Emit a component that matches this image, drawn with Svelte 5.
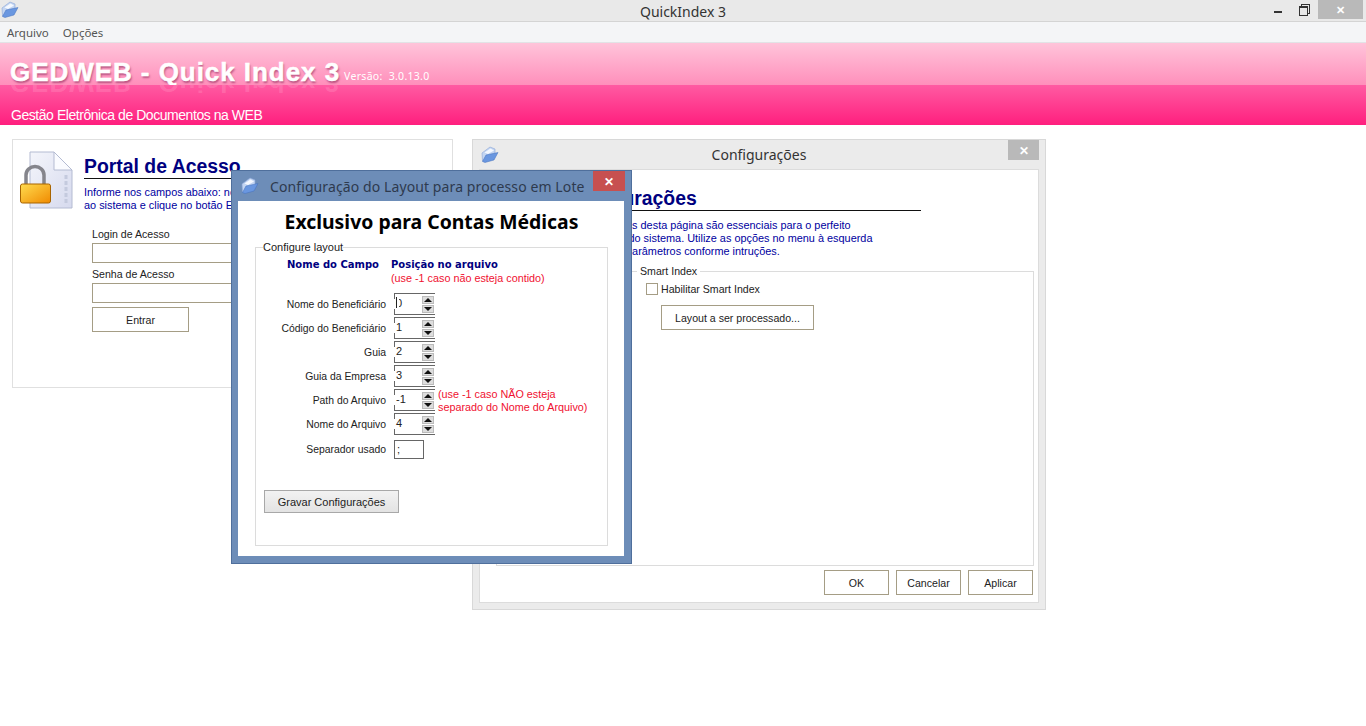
<script>
  const fields = [
    { label: 'Nome do Beneficiário', value: '0', focused: true },
    { label: 'Código do Beneficiário', value: '1' },
    { label: 'Guia', value: '2' },
    { label: 'Guia da Empresa', value: '3' },
    { label: 'Path do Arquivo', value: '-1', note: true },
    { label: 'Nome do Arquivo', value: '4' }
  ]
</script>

{#snippet folder(size)}
  <svg class="folder" width={size} height={size} viewBox="0 0 18 18" aria-hidden="true">
    <path d="M1 7 L9 1 L14 3 L14 8 L4 15 L1.5 15 Z" fill="#c4d6f2" stroke="#8aa5d6" stroke-width=".6" />
    <path d="M3.5 6.5 L9.5 2.5 L13 4.5 L7 8 Z" fill="#f4f8ff" />
    <path d="M1.5 15.5 L5 9 L17 6.5 L13 14 L4 16.5 Z" fill="#6a97e0" stroke="#4470bd" stroke-width=".5" />
  </svg>
{/snippet}

<div class="app">
  <header class="titlebar">
    {@render folder(18)}
    <span class="title">QuickIndex 3</span>
    <div class="controls">
      <span class="min"></span>
      <span class="restore"></span>
      <span class="close">✕</span>
    </div>
  </header>

  <nav class="menu">
    <span>Arquivo</span>
    <span>Opções</span>
  </nav>

  <section class="banner">
    <div class="banner-top">
      <h1>GEDWEB - Quick Index 3</h1>
      <span class="version">Versão: &nbsp;3.0.13.0</span>
    </div>
    <div class="banner-bottom">
      <span class="reflect" aria-hidden="true">GEDWEB - Quick Index 3</span>
      <p>Gestão Eletrônica de Documentos na WEB</p>
    </div>
  </section>

  <main class="desktop">
    <div class="login">
      <svg class="lock" width="56" height="62" viewBox="0 0 56 62" aria-hidden="true">
        <defs>
          <linearGradient id="lockbody" x1="0" y1="0" x2="1" y2="1">
            <stop offset="0" stop-color="#ffdc50" />
            <stop offset="1" stop-color="#f08a00" />
          </linearGradient>
          <linearGradient id="page" x1="0" y1="0" x2="1" y2="1">
            <stop offset="0" stop-color="#f4f5fb" />
            <stop offset="1" stop-color="#d6daee" />
          </linearGradient>
        </defs>
        <path d="M10 1 H34 L52 19 V57 H10 Z" fill="url(#page)" stroke="#b4bbd2" />
        <path d="M34 1 V19 H52 Z" fill="#fafbff" stroke="#b4bbd2" />
        <path d="M46 24 V54" stroke="#c4cade" stroke-width="3" stroke-dasharray="4 2" />
        <path d="M6 33 V24 a9 8.5 0 0 1 18 0 V33" fill="none" stroke="#85858c" stroke-width="3.5" />
        <rect x="0.5" y="33" width="30" height="19" rx="2" fill="url(#lockbody)" stroke="#a86400" />
      </svg>
      <div class="login-body">
        <h2 class="heading">Portal de Acesso</h2>
        <p class="intro">Informe nos campos abaixo: nome de usuário e senha para ter acesso<br />ao sistema e clique no botão Entrar</p>
        <div class="login-form">
          <label for="login">Login de Acesso</label>
          <input id="login" class="text" />
          <label for="senha">Senha de Acesso</label>
          <input id="senha" class="text" />
          <button class="flat enter">Entrar</button>
        </div>
      </div>
    </div>

    <div class="config">
      <div class="config-title">
        {@render folder(18)}
        <span>Configurações</span>
        <b class="config-close">✕</b>
      </div>
      <div class="config-inner">
        <div class="config-text">
          <h2 class="heading">Configurações</h2>
          <p class="intro">As configurações desta página são essenciais para o perfeito<br />funcionamento do sistema. Utilize as opções no menu à esquerda<br />para definir os parâmetros conforme intruções.</p>
        </div>
        <fieldset class="smart">
          <legend>Smart Index</legend>
          <label class="check"><span class="box"></span>Habilitar Smart Index</label>
          <button class="flat layout">Layout a ser processado...</button>
        </fieldset>
        <div class="actions">
          <button class="flat">OK</button>
          <button class="flat">Cancelar</button>
          <button class="flat">Aplicar</button>
        </div>
      </div>
    </div>

    <div class="modal">
      <div class="modal-title">
        {@render folder(18)}
        <span>Configuração do Layout para processo em Lote</span>
        <b class="modal-close">✕</b>
      </div>
      <div class="modal-inner">
        <h3>Exclusivo para Contas Médicas</h3>
        <fieldset class="layout-set">
          <legend>Configure layout</legend>
          <div class="cols">
            <strong class="col-a">Nome do Campo</strong>
            <div>
              <strong>Posição no arquivo</strong>
              <div class="red">(use -1 caso não esteja contido)</div>
            </div>
          </div>
          <div class="rows">
            {#each fields as f}
              <div class="row">
                <span class="lbl">{f.label}</span>
                <div class="spin" class:focused={f.focused}>
                  <span>{f.value}</span>
                  <div class="arrows"><i class="up"></i><i class="down"></i></div>
                </div>
                {#if f.note}
                  <div class="red note">(use -1 caso NÃO esteja<br />separado do Nome do Arquivo)</div>
                {/if}
              </div>
            {/each}
            <div class="row sep">
              <span class="lbl">Separador usado</span>
              <div class="sepbox">;</div>
            </div>
          </div>
          <button class="save">Gravar Configurações</button>
        </fieldset>
      </div>
    </div>
  </main>
</div>

<style>
  :global(body) {
    margin: 0;
    background: #fff;
  }

  .app {
    width: 1366px;
    height: 726px;
    overflow: hidden;
    font-family: "Liberation Sans", Arial, sans-serif;
    font-size: 11px;
    color: #222;
  }

  .titlebar {
    height: 22px;
    box-sizing: border-box;
    padding-top: 2px;
    background: #e9e9e9;
    border-bottom: 1px solid #d4d4d4;
    display: flex;
    align-items: center;
    justify-content: center;
    position: relative;
    font-family: "Noto Sans", sans-serif;
  }

  .titlebar > .folder {
    position: absolute;
    left: 1px;
    top: 1px;
  }

  .title {
    font-size: 14px;
    color: #333;
  }

  .controls {
    position: absolute;
    right: 3px;
    top: 0;
    display: flex;
    align-items: center;
    height: 19px;
  }

  .min {
    width: 8px;
    height: 2px;
    background: #333;
    margin: 5px 17px 0 0;
  }

  .restore {
    width: 7px;
    height: 7px;
    border: 1px solid #333;
    border-top-width: 2px;
    margin: 2px 10px 0 0;
    box-shadow: 2px -2px 0 -1px #e9e9e9, 2px -2px 0 0 #333;
  }

  .close {
    width: 45px;
    height: 19px;
    background: #b9b9b9;
    color: #fff;
    font-size: 11px;
    font-weight: 700;
    display: flex;
    align-items: center;
    justify-content: center;
  }

  .menu {
    height: 21px;
    box-sizing: border-box;
    background: #f4f5f7;
    border-bottom: 1px solid #e2e3e6;
    padding-left: 7px;
    display: flex;
    align-items: center;
    gap: 14px;
    font: 11.5px "Noto Sans", sans-serif;
    color: #555;
  }

  .banner {
    height: 82px;
    display: flex;
    flex-direction: column;
  }

  .banner-top {
    height: 42px;
    background: linear-gradient(#ffc4da, #ff8fbb);
    display: flex;
    align-items: flex-end;
    padding-left: 10px;
    box-sizing: border-box;
  }

  .banner-top h1 {
    margin: 0 0 -2px;
    font: 700 26px/30px "Liberation Sans", Arial, sans-serif;
    letter-spacing: .95px;
    color: #fff;
    -webkit-text-stroke: .5px #fff;
    text-shadow: 1px 2px 2px rgba(130, 30, 80, .55);
  }

  .version {
    font: 10.5px "Noto Sans", sans-serif;
    color: #fff;
    margin: 0 0 2px 4px;
    letter-spacing: .3px;
  }

  .banner-bottom {
    flex: 1;
    background: linear-gradient(#ff5ba2, #ff1f7e);
    position: relative;
    overflow: hidden;
  }

  .reflect {
    position: absolute;
    left: 10px;
    top: -17px;
    font: 700 26px/30px "Liberation Sans", Arial, sans-serif;
    letter-spacing: .95px;
    color: rgba(255, 255, 255, .14);
    transform: scaleY(-1);
  }

  .banner-bottom p {
    position: absolute;
    left: 11px;
    top: 21px;
    margin: 0;
    font: 14px/18px "Liberation Sans", Arial, sans-serif;
    color: #fff;
    letter-spacing: -.45px;
  }

  .desktop {
    position: relative;
    height: 601px;
  }

  .login {
    position: absolute;
    left: 12px;
    top: 14px;
    width: 441px;
    height: 249px;
    border: 1px solid #e0e0e0;
    display: flex;
    gap: 8px;
    padding: 11px 0 0 7px;
    box-sizing: border-box;
  }

  .lock {
    flex: none;
  }

  .login-body {
    flex: 1;
    min-width: 0;
  }

  .heading {
    margin: 3px 0 0;
    width: 340px;
    font: 700 19.4px/24px "Liberation Sans", Arial, sans-serif;
    color: #00007f;
    border-bottom: 1px solid #111;
  }

  .intro {
    margin: 7px 0 0;
    font-size: 10.9px;
    line-height: 13px;
    color: #0000a0;
    white-space: nowrap;
  }

  .login-form {
    margin: 15px 0 0 8px;
    display: flex;
    flex-direction: column;
    align-items: flex-start;
    font-size: 10.6px;
  }

  .login-form label {
    line-height: 14px;
  }

  .text {
    width: 300px;
    height: 18px;
    border: 1px solid #a59d85;
    margin: 2px 0 4px;
    padding: 0;
    box-sizing: content-box;
    background: #fff;
  }

  .flat {
    height: 25px;
    border: 1px solid #a59d85;
    background: #fff;
    font: inherit;
    font-size: 10.6px;
    color: #222;
    padding: 0;
  }

  .enter {
    width: 97px;
  }

  .config {
    position: absolute;
    left: 472px;
    top: 14px;
    width: 574px;
    height: 471px;
    background: #ebebeb;
    border: 1px solid #d8d8d8;
    box-sizing: border-box;
    padding: 0 6px 6px;
    display: flex;
    flex-direction: column;
  }

  .config-title {
    height: 29px;
    flex: none;
    display: flex;
    align-items: center;
    justify-content: center;
    font: 14px "Noto Sans", sans-serif;
    color: #333;
    position: relative;
  }

  .config-title .folder {
    position: absolute;
    left: 2px;
    top: 6px;
  }

  .config-close {
    position: absolute;
    right: 0;
    top: 0;
    width: 31px;
    height: 20px;
    background: #b9b9b9;
    color: #fff;
    font-size: 12px;
    display: flex;
    align-items: center;
    justify-content: center;
  }

  .config-inner {
    flex: 1;
    background: #fff;
    border: 1px solid #dcdcdc;
    box-sizing: border-box;
    padding: 16px 5px 7px 16px;
    display: flex;
    flex-direction: column;
    min-height: 0;
  }

  .config-text {
    padding-left: 65px;
  }

  .config-text .heading {
    margin-top: 0;
    width: 360px;
  }

  .config-text .intro {
    margin: 8px 0 0 -7px;
  }

  .smart {
    flex: 1;
    margin: 7px -1px 0 0;
    border: 1px solid #dcdcdc;
    padding: 0 0 0 149px;
    min-height: 0;
    min-width: 0;
    font-size: 10.6px;
  }

  .smart legend {
    padding: 0 3px;
    margin-left: -9px;
  }

  .check {
    display: flex;
    align-items: center;
    gap: 3px;
    margin: 6px 0 10px;
  }

  .box {
    width: 10px;
    height: 10px;
    border: 1px solid #a59d85;
  }

  .layout {
    width: 153px;
    margin-left: 15px;
  }

  .actions {
    display: flex;
    justify-content: flex-end;
    gap: 7px;
    margin-top: 4px;
  }

  .actions .flat {
    width: 65px;
  }

  .modal {
    position: absolute;
    left: 231px;
    top: 45px;
    width: 401px;
    height: 394px;
    background: #6d8db8;
    border: 1px solid #4f6f9c;
    box-sizing: border-box;
    padding: 0 7px 7px 6px;
    display: flex;
    flex-direction: column;
  }

  .modal-title {
    height: 30px;
    flex: none;
    display: flex;
    align-items: center;
    padding-left: 32px;
    font: 14px "Noto Sans", sans-serif;
    letter-spacing: .1px;
    color: #2e3a4e;
    position: relative;
  }

  .modal-title .folder {
    position: absolute;
    left: 3px;
    top: 6px;
  }

  .modal-close {
    position: absolute;
    right: -1px;
    top: 0;
    width: 32px;
    height: 20px;
    background: #c75050;
    color: #fff;
    font-size: 12px;
    display: flex;
    align-items: center;
    justify-content: center;
  }

  .modal-inner {
    flex: 1;
    background: #fff;
    padding: 0 16px 10px 17px;
    display: flex;
    flex-direction: column;
    min-height: 0;
  }

  h3 {
    margin: 9px 0 0;
    text-align: center;
    font: 700 19.4px/24px "Noto Sans", sans-serif;
    color: #000;
  }

  .layout-set {
    flex: 1;
    margin: 7px 0 0;
    border: 1px solid #dcdcdc;
    padding: 0;
    min-width: 0;
    min-height: 0;
  }

  .layout-set legend {
    padding: 0;
    margin-left: 7px;
    line-height: 13px;
  }

  .cols {
    display: flex;
    padding-left: 31px;
    margin-top: 4px;
    line-height: 13px;
  }

  .cols strong {
    display: block;
    color: #00007f;
    font-family: "DejaVu Sans", Verdana, sans-serif;
    font-size: 10px;
    margin-bottom: 1px;
  }

  .col-a {
    width: 104px;
    flex: none;
  }

  .red {
    color: #f01030;
    font-size: 10.8px;
  }

  .rows {
    margin-top: 8px;
    display: flex;
    flex-direction: column;
    gap: 2px;
  }

  .row {
    height: 22px;
    display: flex;
    align-items: center;
    position: relative;
  }

  .row.sep {
    height: 19px;
    margin-top: 3px;
  }

  .lbl {
    width: 130px;
    text-align: right;
    flex: none;
    margin-right: 8px;
    font-size: 10.4px;
  }

  .spin {
    width: 41px;
    height: 22px;
    border-top: 1px solid #666;
    border-bottom: 1px solid #666;
    box-sizing: border-box;
    position: relative;
    display: flex;
    align-items: center;
    padding: 0 0 3px 2px;
  }

  .spin::before {
    content: "";
    position: absolute;
    left: 0;
    top: 0;
    bottom: 0;
    width: 1px;
    background: linear-gradient(#666 5px, transparent 5px, transparent 15px, #666 15px);
  }

  .focused::after {
    content: "";
    position: absolute;
    left: 2px;
    top: 3px;
    width: 3px;
    height: 11px;
    background: #fff;
    border-left: 1px solid #222;
    box-sizing: border-box;
  }

  .arrows {
    position: absolute;
    right: 1px;
    top: 2px;
    width: 12px;
    display: flex;
    flex-direction: column;
    gap: 1px;
  }

  .arrows i {
    height: 8px;
    background: #ddd;
    border: 1px solid #bbb;
    box-sizing: border-box;
    position: relative;
  }

  .arrows i::after {
    content: "";
    position: absolute;
    left: 1px;
    border-left: 4px solid transparent;
    border-right: 4px solid transparent;
  }

  .up::after {
    top: 1px;
    border-bottom: 4px solid #111;
  }

  .down::after {
    top: 1px;
    border-top: 4px solid #111;
  }

  .note {
    position: absolute;
    left: 182px;
    top: -1px;
    line-height: 13px;
    white-space: nowrap;
  }

  .sepbox {
    width: 30px;
    height: 19px;
    border: 1px solid #666;
    box-sizing: border-box;
    padding-left: 2px;
    line-height: 17px;
  }

  .save {
    display: block;
    width: 135px;
    height: 23px;
    margin: 31px 0 0 8px;
    background: linear-gradient(#f2f2f2, #e3e3e3);
    border: 1px solid #a8a8a8;
    font: inherit;
    color: #222;
    padding: 0;
  }
</style>
